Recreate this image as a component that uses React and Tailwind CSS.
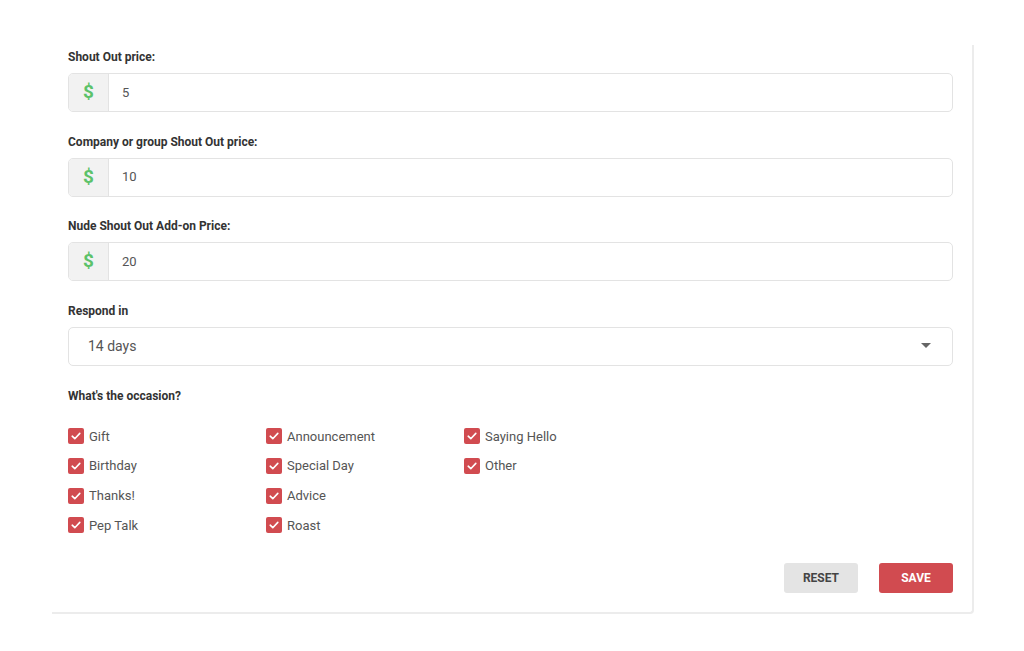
import React from "react";

const font = { fontFamily: "Roboto, 'Liberation Sans', sans-serif" };

function PriceField({ label, value }) {
  return (
    <div className="mb-[21.5px]">
      <div className="text-[12px] leading-[16px] font-bold text-[#333] mb-2">{label}</div>
      <div className="flex h-[39px] border border-[#e3e3e3] rounded-[5px] overflow-hidden">
        <div className="w-[40px] flex items-center justify-center bg-[#f2f2f2] border-r border-[#e3e3e3] text-[#5cc26a] font-bold text-[19px]">$</div>
        <div className="flex-1 flex items-center pl-[13px] text-[13px] text-[#555]">{value}</div>
      </div>
    </div>
  );
}

function Check({ label }) {
  return (
    <div className="flex items-center h-[29.7px]">
      <div className="w-[16px] h-[16px] rounded-[2px] bg-[#d14b50] flex items-center justify-center mr-[5px]">
        <svg width="12" height="12" viewBox="0 0 12 12" fill="none">
          <path d="M2.2 6.2 L4.8 8.7 L9.8 3.4" stroke="white" strokeWidth="1.6" strokeLinecap="round" strokeLinejoin="round" />
        </svg>
      </div>
      <span className="text-[13px] text-[#555]">{label}</span>
    </div>
  );
}

export default function App() {
  const cols = [
    ["Gift", "Birthday", "Thanks!", "Pep Talk"],
    ["Announcement", "Special Day", "Advice", "Roast"],
    ["Saying Hello", "Other"],
  ];
  return (
    <div className="w-[1024px] h-[651px] bg-white overflow-hidden" style={font}>
      <div className="ml-[52px] mt-[45px] w-[922px] border-r-2 border-b-2 border-[#ececec] rounded-br-[4px] pt-[4px] pl-[16px] pr-[19px] pb-[19px]">
        <PriceField label="Shout Out price:" value="5" />
        <PriceField label="Company or group Shout Out price:" value="10" />
        <PriceField label="Nude Shout Out Add-on Price:" value="20" />
        <div className="mb-[22px]">
          <div className="text-[12px] leading-[16px] font-bold text-[#333] mb-2">Respond in</div>
          <div className="flex items-center justify-between h-[39px] border border-[#e3e3e3] rounded-[5px] pl-[19px] pr-[21px]">
            <span className="text-[14px] text-[#555]">14 days</span>
            <svg width="10" height="6" viewBox="0 0 10 6"><path d="M0 0 L10 0 L5 5 Z" fill="#666" /></svg>
          </div>
        </div>
        <div className="text-[12px] leading-[16px] font-bold text-[#333] mb-[18px]">What's the occasion?</div>
        <div className="flex">
          {cols.map((c, i) => (
            <div key={i} className="w-[198px]">
              {c.map((l) => (
                <Check key={l} label={l} />
              ))}
            </div>
          ))}
        </div>
        <div className="flex justify-end gap-[21px] mt-[23px]">
          <button className="w-[74px] h-[30px] rounded-[3px] bg-[#e4e4e4] text-[#444] text-[12px] font-bold">RESET</button>
          <button className="w-[74px] h-[30px] rounded-[3px] bg-[#d14b50] text-white text-[12px] font-bold">SAVE</button>
        </div>
      </div>
    </div>
  );
}
